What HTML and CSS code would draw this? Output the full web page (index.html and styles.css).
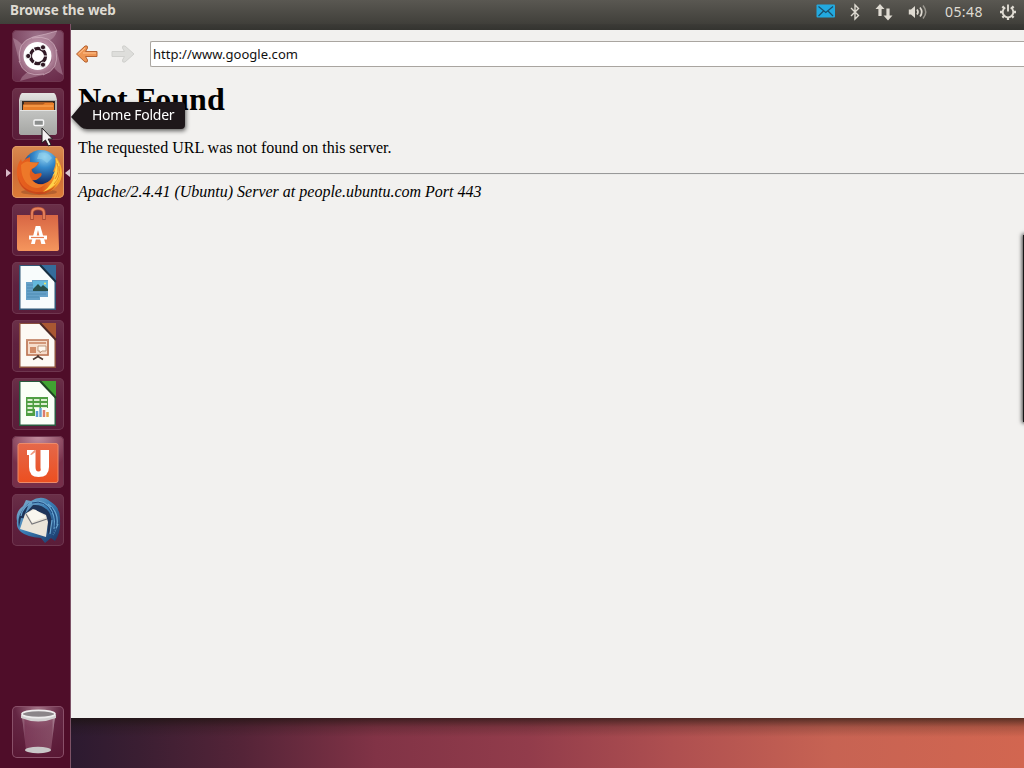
FILE: index.html
```html
<!DOCTYPE html>
<html lang="en">
<head>
<meta charset="utf-8">
<title>Browse the web</title>
<link rel="stylesheet" href="styles.css">
</head>
<body>
<div class="desktop">
  <header class="panel">
    <span class="panel-title">Browse the web</span>
    <div class="indicators">
      <svg class="ind mail" width="20" height="14" viewBox="0 0 20 14"><rect x=".5" y=".5" width="18.5" height="13" rx="1" fill="#22a9df"/><path d="M2.5 2.5 9.8 8.5 17 2.5M2.5 12 7.5 7M17 12 12 7" fill="none" stroke="#1b4f6b" stroke-width="1.2"/></svg>
      <svg class="ind bt" width="10" height="18" viewBox="0 0 10 18"><path d="M1 5 8.500 12.500 5 16V2L8.500 5.500 1 13" fill="none" stroke="#dfdbd2" stroke-width="1.400"/></svg>
      <svg class="ind net" width="18" height="18" viewBox="0 0 18 18"><path d="M5 1 9.500 6H6.600V13H3.400V6H.5ZM13 17.500 8.500 12.500H11.400V5.500H14.600V12.500H17.500Z" fill="#dfdbd2"/></svg>
      <svg class="ind vol" width="20" height="16" viewBox="0 0 20 16"><path d="M.8 5.500H3L7 2V14L3 10.500H.8Z" fill="#dfdbd2"/><path d="M9 5.500Q11 8 9 10.500M12 3.500Q15.500 8 12 12.500" fill="none" stroke="#dfdbd2" stroke-width="1.700"/><path d="M15 1.500Q20.500 8 15 14.500" fill="none" stroke="#9b9890" stroke-width="1.500"/></svg>
      <span class="clock">05:48</span>
      <svg class="ind gear" width="18" height="18" viewBox="0 0 18 18"><g stroke="#dfdbd2" fill="none"><path d="M6.300 4.500A5.300 5.300 0 1 0 11.700 4.500" stroke-width="1.900"/><path d="M9 1.500V8.500" stroke-width="1.900"/><path d="M1 9H4M14 9H17M3.400 3.400 5.200 5.200M14.600 3.400 12.800 5.200M3.400 14.600 5.200 12.800M14.600 14.600 12.800 12.800M9 14V17" stroke-width="2.300"/></g></svg>
    </div>
  </header>

  <div class="workspace">
    <nav class="launcher">
      <div class="tile dash"><svg viewBox="0 0 52 52">
        <defs><radialGradient id="swirl"><stop offset=".6" stop-color="#d3afc0"/><stop offset="1" stop-color="#96587a" stop-opacity=".3"/></radialGradient></defs>
        <circle cx="26" cy="26" r="19" fill="url(#swirl)" opacity=".7"/>
        <g fill="#e0c3d0" opacity=".32"><path d="M8 32Q4 12 21 7Q35 4 45 1Q42 12 29 12Q16 11 12 21Z"/><path d="M20 8Q40 4 45 21Q48 34 51 45Q40 40 40 29Q40 17 31 12Z"/><path d="M44 20Q48 40 31 45Q18 48 8 51Q12 41 23 40Q35 40 40 31Z"/><path d="M32 44Q12 48 7 31Q4 18 1 8Q12 12 12 23Q12 35 21 40Z"/></g>
        <g fill="none" stroke="#dfc3cf" stroke-width=".8" opacity=".7"><path d="M8 32Q4 12 21 7Q35 4 45 1"/><path d="M20 8Q40 4 45 21"/><path d="M44 20Q48 40 31 45"/><path d="M32 44Q12 48 7 31"/></g>
        <circle cx="25.500" cy="26" r="14" fill="#fff"/>
        <circle cx="26" cy="26" r="7.500" fill="none" stroke="#301a25" stroke-width="3.400"/>
        <g stroke="#fff" stroke-width="1.100"><path d="M26 26 36 26M26 26 21 17.500M26 26 21 34.500"/></g>
        <circle cx="26" cy="26" r="5.700" fill="#fff"/>
        <g fill="#301a25" stroke="#fff" stroke-width=".9"><circle cx="16.200" cy="26" r="2.600"/><circle cx="31" cy="17.300" r="2.600"/><circle cx="31" cy="34.700" r="2.600"/></g>
      </svg></div>

      <div class="tile files"><svg viewBox="0 0 52 52">
        <defs><linearGradient id="cab" x2="0" y2="1"><stop stop-color="#e4e4e2"/><stop offset=".45" stop-color="#bdbdbb"/><stop offset="1" stop-color="#a3a3a0"/></linearGradient>
        <linearGradient id="drawer" x2="0" y2="1"><stop stop-color="#c3c4c2"/><stop offset="1" stop-color="#a5a6a3"/></linearGradient></defs>
        <path d="M10 5H42Q44 6 45 12V44Q45 47 42 47H10Q7 47 7 44V12Q8 6 10 5Z" fill="url(#cab)"/>
        <path d="M8 12H45V25H8Z" fill="#b0b0af"/><path d="M10 13H43V22H10Z" fill="#342923"/>
        <path d="M12 14H41V17H12Z" fill="#aa5a22"/><path d="M11 16.500H31L33 15H42V22H11Z" fill="#e87f2b"/><path d="M12 18H41" stroke="#ffad5d"/>
        <path d="M7 22H45V44Q45 47 42 47H10Q7 47 7 44Z" fill="url(#drawer)"/><path d="M8 22.500H44" stroke="#e4e4e3"/>
        <rect x="22" y="32" width="9.500" height="5.500" rx="1" fill="#8b8e8d" stroke="#f7f7f7" stroke-width="1.400"/>
      </svg></div>

      <div class="tile firefox"><svg viewBox="0 0 52 52">
        <defs><radialGradient id="globe" cx=".6" cy=".18" r=".75"><stop stop-color="#9bd8f3"/><stop offset=".4" stop-color="#3489cb"/><stop offset="1" stop-color="#12265f"/></radialGradient>
        <linearGradient id="fox" x2="1"><stop stop-color="#e8601f"/><stop offset=".55" stop-color="#dd5a1b"/><stop offset="1" stop-color="#ffb92e"/></linearGradient></defs>
        <ellipse cx="27" cy="46" rx="18" ry="3" fill="#803e24" opacity=".4"/>
        <circle cx="29" cy="22.500" r="18.500" fill="url(#globe)"/>
        <path d="M27 7Q35 5 40 12L35 17 30 13 25 13Z" fill="#8fd1ec" opacity=".6"/>
        <path d="M45 12Q55 28 45 40Q37 49 25 48Q7 46 5 29Q4 20 9 13L10 16Q14 12 18 11L18 16Q22 17 27 16Q26 20 20 23Q19 26 23 28L29 27Q31 29 27 32Q24 35 20 34Q24 39 31 38Q40 36 43 25L41 26 43 20Q44 16 43 12Z" fill="url(#fox)"/>
        <path d="M9 19Q14 14 18 16L26 17Q24 21 19 23Q16 29 20 34Q25 40 33 38Q28 44 20 41Q9 36 9 19Z" fill="#f0812d" opacity=".75"/>
        <path d="M6 30Q9 44 24 46Q36 47 44 39Q37 50 25 48Q8 46 6 30Z" fill="#b93a1b" opacity=".6"/>
        <path d="M44 12Q52 25 45 36Q40 43 31 46Q42 37 43 28L40 31Q46 21 44 12Z" fill="#ffd24a"/>
        <path d="M45 17Q48 26 43 33M47 20Q49 31 42 38" fill="none" stroke="#e88a24" stroke-width="1"/>
      </svg><i class="running"></i><i class="active"></i></div>

      <div class="tile software"><svg viewBox="0 0 52 52">
        <defs><linearGradient id="bag" x2="0" y2="1"><stop stop-color="#d86644"/><stop offset="1" stop-color="#f5965d"/></linearGradient></defs>
        <path d="M5 11H46L47 45Q47 47 44 47H7Q5 47 5 44Z" fill="url(#bag)"/>
        <path d="M20 16V9Q20 4.500 26 4.500T32 9V16" fill="none" stroke="#a94b36" stroke-width="3.500"/><path d="M20 15V9Q20 4.500 26 4.500T32 9V15" fill="none" stroke="#e7825d" stroke-width="1.800"/>
        <path d="M19 40 23.700 22H28.300L33.500 40H29.300L26 26 22.800 40Z" fill="#fff"/><path d="M17 33.500H35" stroke="#fff" stroke-width="4"/><path d="M19 33.500H32" stroke="#e97e52" stroke-width="1.200"/>
      </svg></div>

      <div class="tile"><svg viewBox="0 0 52 52">
        <path d="M7 3H44V48H7Z" fill="#315777"/><path d="M8.500 4H29L42.500 18V46.500H8.500Z" fill="#f8fcfc"/><path d="M29 3H44V20Z" fill="#356c9b"/><path d="M28 3 44 20" stroke="#182f42" stroke-width="2"/>
        <path d="M14 20H20V18H36V35H28V38H14Z" fill="#67a2c9"/><path d="M15 23H22M15 26H22M15 29H34M15 32H34M15 35H27" stroke="#4f8cb4"/><path d="M21 19H36V29H21Z" fill="#63b9dc"/><path d="M21 29V27L26 22 29 25 31 23 36 27V29Z" fill="#284f49"/><circle cx="33" cy="21.500" r="1" fill="#f8ee63"/>
      </svg></div>

      <div class="tile"><svg viewBox="0 0 52 52">
        <path d="M7 3H44V48H7Z" fill="#8b4f3c"/><path d="M8.500 4H29L42.500 18V46.500H8.500Z" fill="#fdf9f4"/><path d="M29 3H44V20Z" fill="#a95832"/><path d="M28 3 44 20" stroke="#4e2925" stroke-width="2"/>
        <path d="M14 20H37V36H14Z" fill="#f6ddcc"/><path d="M14 20H37M15 21V35H36V21" fill="none" stroke="#b97252" stroke-width="1.600"/><path d="M17 23H34" stroke="#cb8665" stroke-width="1.600"/><path d="M18 27H24V33H18Z" fill="#d08b68"/><path d="M26 26H34V31H30L28 33V31H26Z" fill="#fff7ef" stroke="#b08667" stroke-width=".8"/><path d="M26 35V37M21 39.500 26 36.500 31 39.500" fill="none" stroke="#4b3730" stroke-width="1.600"/>
      </svg></div>

      <div class="tile"><svg viewBox="0 0 52 52">
        <path d="M7 3H44V48H7Z" fill="#285b3e"/><path d="M8.500 4H29L42.500 18V46.500H8.500Z" fill="#fafff7"/><path d="M29 3H44V20Z" fill="#41a332"/><path d="M28 3 44 20" stroke="#214624" stroke-width="2"/>
        <path d="M14 19H36V38H14Z" fill="#4f9e43"/><path d="M15.500 22H20.500M22 22H27.500M29 22H35M15.500 26H20.500M22 26H27.500M29 26H35M15.500 30H20.500M22 30H27.500M29 30H35M15.500 34H20.500" stroke="#dcefd2" stroke-width="2.200"/><path d="M23 30H37V39H23Z" fill="#fafff7"/><path d="M25 39V33" stroke="#5b9bd1" stroke-width="2.500"/><path d="M28.500 39V30" stroke="#6aa4d2" stroke-width="2.500"/><path d="M32 39V32" stroke="#dc7c6d" stroke-width="2.500"/><path d="M35.500 39V34" stroke="#e5a54b" stroke-width="2.500"/>
      </svg></div>

      <div class="tile one"><svg viewBox="0 0 52 52">
        <defs><linearGradient id="uone" x2="0" y2="1"><stop stop-color="#e5684a"/><stop offset="1" stop-color="#ec4f20"/></linearGradient></defs>
        <rect x="6" y="7.500" width="40" height="39" rx="2" fill="url(#uone)" stroke="#ee8b69"/><path d="M15 14H23.500V31Q23.500 35.500 26.500 35.500T28.500 32V14H37V31Q37 41 26.500 41Q17 41 17 31V19H15Z" fill="#fff"/><path d="M18 18.500 22.500 14H23.500V16L19.500 19Z" fill="#f09a80"/>
      </svg></div>

      <div class="tile"><svg viewBox="0 0 52 52">
        <defs><linearGradient id="bird" x2="1" y2="1"><stop stop-color="#8db3cc"/><stop offset=".45" stop-color="#3a7fb7"/><stop offset="1" stop-color="#17305f"/></linearGradient></defs>
        <path d="M5 27Q3 18 11 12L14 6 19 7Q30 0 39 8Q49 14 48 27Q49 38 43 47L39 44 33 49 29 44Q15 43 9 38Q4 34 5 27Z" fill="url(#bird)"/>
        <path d="M7 33Q4 20 17 9L13 20 21 11Q31 10 37 18Q41 25 39 37L36 40 35 28 9 24Z" fill="#1e3459"/>
        <path d="M13 20 21 15 34 21 36 28 34 43 8 35Z" fill="#ebe5da"/><path d="M14 20 20 30 35 25" fill="none" stroke="#77777b" stroke-width="1.100"/><path d="M15 19 23 15.500 34 23 20 28Z" fill="#f9f7f0"/>
        <path d="M17 10Q29 3 38 14Q44 22 42 35M22 8Q35 6 42 22M36 10Q47 18 45 31M9 22Q10 15 17 10M46 30 41 41M40 26 38 40" fill="none" stroke="#68a5d0" stroke-width="1.200"/>
        <path d="M20 9Q33 5 40 19M39 13Q45 22 43 33M44 34 40 43" fill="none" stroke="#1d467c" stroke-width="1"/>
      </svg></div>

      <div class="tile trash"><svg viewBox="0 0 52 52">
        <defs><linearGradient id="glass" x2="1"><stop stop-color="#c4a8b4" stop-opacity=".6"/><stop offset=".1" stop-color="#965372" stop-opacity=".5"/><stop offset=".9" stop-color="#a77388" stop-opacity=".5"/><stop offset="1" stop-color="#dccbd3" stop-opacity=".7"/></linearGradient></defs>
        <path d="M10 11H43L39 44Q26 51 14 44Z" fill="url(#glass)"/><ellipse cx="26" cy="44" rx="13" ry="3.200" fill="#c9c7c8"/><path d="M9 9V12Q26 19 44 12V9Z" fill="#d2d0d1"/><ellipse cx="26.500" cy="8" rx="16.500" ry="3.700" fill="#8b8589" stroke="#eeeced" stroke-width="1.800"/>
      </svg></div>
    </nav>

    <main class="stage">
      <section class="browser">
        <div class="toolbar">
          <svg class="arrow" width="24" height="20" viewBox="0 0 24 20"><path d="M1.500 10 10 2Q13 1 12.500 4L10.500 7.500H22V12.500H10.500L12.500 16Q13 19 10 18Z" fill="#ee9653" stroke="#b56232" stroke-linejoin="round"/><path d="M3.500 10 10 4M8 9H21" stroke="#ffc291" fill="none"/></svg>
          <svg class="arrow" width="24" height="20" viewBox="0 0 24 20"><path d="M23 10 14 2Q11 1 11.500 4L13.500 7.500H1V12.500H13.500L11.500 16Q11 19 14 18Z" fill="#dededb" stroke="#d0d0cd" stroke-linejoin="round"/></svg>
          <div class="address">http://www.google.com</div>
        </div>
        <article class="page">
          <h1>Not Found</h1>
          <p>The requested URL was not found on this server.</p>
          <hr>
          <address>Apache/2.4.41 (Ubuntu) Server at people.ubuntu.com Port 443</address>
        </article>
      </section>
    </main>
  </div>

  <div class="edge-window"></div>
  <div class="tooltip"><svg width="115" height="28" viewBox="0 0 115 28"><path d="M0 15 10 3Q12 0 16 0H110Q114 0 114 4V23Q114 27 110 27H16Q12 27 10 25Z" fill="#1e171a"/></svg><span>Home Folder</span></div>
  <svg class="cursor" width="14" height="21" viewBox="0 0 14 21"><path d="M1 1V16L4.500 13 7.500 19 10 17.800 7.200 12H11.500Z" fill="#f4f2f1" stroke="#201c1e"/></svg>
</div>
</body>
</html>
```
FILE: styles.css
```css
* { box-sizing: border-box; }
body { margin: 0; }
.desktop {
  position: relative;
  width: 1024px;
  height: 768px;
  overflow: hidden;
  display: flex;
  flex-direction: column;
  font-family: "Noto Sans", "Open Sans", sans-serif;
  background: #3c3b37;
}
.panel {
  height: 24px;
  flex: none;
  display: flex;
  justify-content: space-between;
  padding: 0 7px 0 10px;
  background: linear-gradient(#5a5852, #403f3a);
  color: #dfdbd2;
}
.panel-title { font-size: 13.5px; line-height: 20px; font-weight: 700; letter-spacing: -.1px; }
.indicators { display: flex; align-items: center; }
.mail { margin: -2px 14px 0 0; }
.bt { margin-right: 15px; }
.net { margin-right: 15px; }
.vol { margin-right: 17px; }
.clock { width: 38px; margin-right: 16px; font-size: 14px; line-height: 24px; letter-spacing: .4px; white-space: nowrap; }
.workspace { flex: 1; display: flex; min-height: 0; }
.launcher {
  width: 71px;
  flex: none;
  display: flex;
  flex-direction: column;
  gap: 6px;
  padding: 6px 0 10px 12px;
  background: #4f0d29;
  border-right: 1px solid #7d5266;
}
.tile {
  position: relative;
  width: 52px;
  height: 52px;
  flex: none;
  border-radius: 5px;
  background: linear-gradient(#6b3048, #5f213f 45%, #5b1d39);
  box-shadow: inset 0 0 0 1px #6f364f;
}
.tile > svg { display: block; width: 52px; height: 52px; }
.dash { background: radial-gradient(circle at 50% 10%, #9c7189, #79415d 55%, #682847); }
.firefox { background: linear-gradient(#d98b50, #cb6c38 50%, #dd7b37); box-shadow: inset 0 0 0 1px #e09a66; }
.one { background: radial-gradient(circle at 50% 0, #c38fa0, #762f4a 60%); }
.trash { margin-top: auto; background: radial-gradient(circle at 50% 0, #a67689, #642643 40%, #581633); box-shadow: inset 0 0 0 1px #895069; }
.running, .active { position: absolute; top: 23px; border: 4px solid transparent; }
.running { left: -6px; border-left: 5px solid #d9b9c7; border-right: 0; }
.active { right: -6px; border-right: 5px solid #d9c8d0; border-left: 0; }
.stage {
  flex: 1;
  min-width: 0;
  padding-top: 6px;
  background:
    linear-gradient(#3c3b37, #343430) top / 100% 6px no-repeat,
    linear-gradient(transparent 694px, rgba(25, 18, 12, .65) 694px, rgba(25, 18, 12, .2) 703px, transparent 713px),
    linear-gradient(90deg, #2c1a30 0, #3a1e32 7%, #552438 18%, #813346 32%, #923c4b 48%, #ae4f50 63%, #c76353 80%, #d26650 100%);
}
.browser { height: 688px; background: #f2f1ef; }
.toolbar { height: 46px; display: flex; align-items: center; padding: 2px 0 0 4px; }
.arrow { flex: none; margin-right: 12px; }
.address {
  flex: 1;
  height: 26px;
  margin-left: 3px;
  padding-left: 2px;
  border: 1px solid #a9a5a0;
  border-right: 0;
  border-radius: 2px 0 0 2px;
  background: #fff;
  color: #111;
  font-size: 13px;
  line-height: 24px;
  letter-spacing: .03px;
}
.page { padding: 5px 0 0 7px; color: #000; font-family: "Liberation Serif", serif; font-size: 16px; line-height: 18px; }
.page h1 { margin: 0; font-size: 32px; line-height: 36px; }
.page p { margin: 22px 0 16px; }
.page hr { margin: 0 0 8px; border: 0; border-top: 1px solid #999; border-bottom: 1px solid #ececea; }
.tooltip { position: absolute; left: 71px; top: 102px; width: 115px; height: 28px; filter: drop-shadow(1px 2px 2px rgba(0, 0, 0, .6)); }
.tooltip svg { display: block; }
.tooltip span { position: absolute; left: 21px; top: 3px; color: #fff; font-size: 14px; line-height: 20px; letter-spacing: -.25px; white-space: nowrap; }
.edge-window { position: absolute; left: 1023px; top: 235px; width: 20px; height: 187px; background: #171717; box-shadow: 0 0 4px 1px rgba(0, 0, 0, .75); }
.cursor { position: absolute; left: 41px; top: 127px; }
```
